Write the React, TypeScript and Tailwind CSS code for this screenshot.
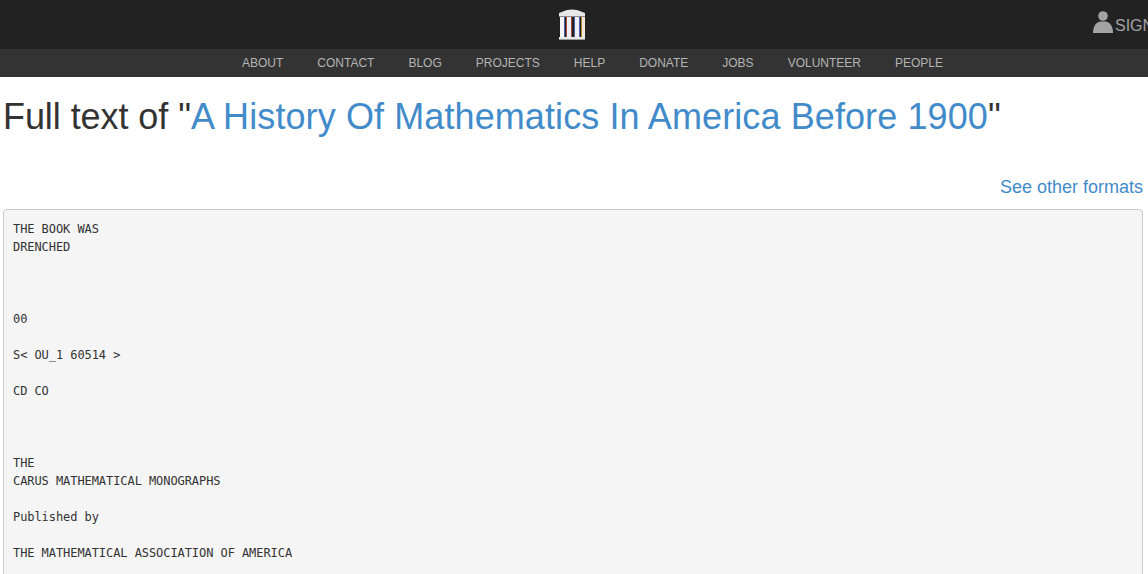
import React from 'react';

const navItems = ['ABOUT', 'CONTACT', 'BLOG', 'PROJECTS', 'HELP', 'DONATE', 'JOBS', 'VOLUNTEER', 'PEOPLE'];

const fullText = `THE BOOK WAS
DRENCHED



00

S< OU_1 60514 >

CD CO



THE
CARUS MATHEMATICAL MONOGRAPHS

Published by

THE MATHEMATICAL ASSOCIATION OF AMERICA`;

const Logo: React.FC = () => (
  <svg width="28" height="31" viewBox="0 0 28 31" aria-hidden="true">
    <path d="M1 4 L9 1 Q14 0 19 1 L27 4 L27 7 L1 7 Z" fill="#e8e8e8" />
    <rect x="1" y="7" width="26" height="1" fill="#8a8a8a" />
    <rect x="2" y="8" width="4" height="20" fill="#f5f5f5" />
    <rect x="9" y="8" width="4" height="20" fill="#eeeef6" />
    <rect x="17" y="8" width="4" height="20" fill="#eeeef6" />
    <rect x="24" y="8" width="3" height="20" fill="#f5e8d8" />
    <rect x="6" y="8" width="1" height="20" fill="#4a5fb0" />
    <rect x="8" y="8" width="1" height="20" fill="#b04a3a" />
    <rect x="13" y="8" width="1" height="20" fill="#b04a3a" />
    <rect x="16" y="8" width="1" height="20" fill="#4a5fb0" />
    <rect x="21" y="8" width="1" height="20" fill="#4a5fb0" />
    <rect x="23" y="8" width="1" height="20" fill="#b8862f" />
    <rect x="1" y="28" width="26" height="2" fill="#e8e8e8" />
    <rect x="1" y="30" width="26" height="1" fill="#9a9a9a" />
  </svg>
);

const UserIcon: React.FC = () => (
  <svg width="20" height="22" viewBox="0 0 20 22" fill="#a3a3a3" aria-hidden="true">
    <circle cx="10" cy="5" r="4.8" />
    <path d="M0 22 C0 15 3 11.5 7 10.5 L13 10.5 C17 11.5 20 15 20 22 Z" />
  </svg>
);

export default function App() {
  return (
    <div className="h-[574px] w-[1148px] overflow-hidden bg-white font-['Liberation_Sans',sans-serif] text-[#333]">
      <header className="relative flex h-[49px] items-start justify-center bg-[#222] pt-[9px]">
        <div className="-ml-[5px]">
          <Logo />
        </div>
        <a className="absolute left-[1093px] top-[11px] flex items-end gap-[2px] whitespace-nowrap text-[16px] leading-[22px] text-[#a3a3a3]">
          <UserIcon />
          <span className="translate-y-[4px]">SIGN IN</span>
        </a>
      </header>
      <nav className="flex h-[28px] items-center justify-center gap-[34px] bg-[#333] pl-[37px] text-[12px] text-[#b3b3b3]">
        {navItems.map((item) => (
          <a key={item}>{item}</a>
        ))}
      </nav>
      <main className="px-[3px]">
        <h1 className="mt-[20px] h-[40px] text-[36px] leading-[40px] tracking-[-0.07px] whitespace-nowrap">
          Full text of "<a className="tracking-[0.1px] text-[#428bca]">A History Of Mathematics In America Before 1900</a>"
        </h1>
        <div className="mt-[40px] pr-[2px] text-right text-[18px] leading-[20px]">
          <a className="text-[#428bca]">See other formats</a>
        </div>
        <pre className="mt-[12px] min-h-[500px] w-[1140px] rounded-[4px] border border-[#ccc] bg-[#f5f5f5] px-[9px] pt-[10px] pb-[9px] font-['DejaVu_Sans_Mono',monospace] text-[12px] leading-[18px] tracking-[-0.07px] text-[#333]">
          {fullText}
        </pre>
      </main>
    </div>
  );
}
